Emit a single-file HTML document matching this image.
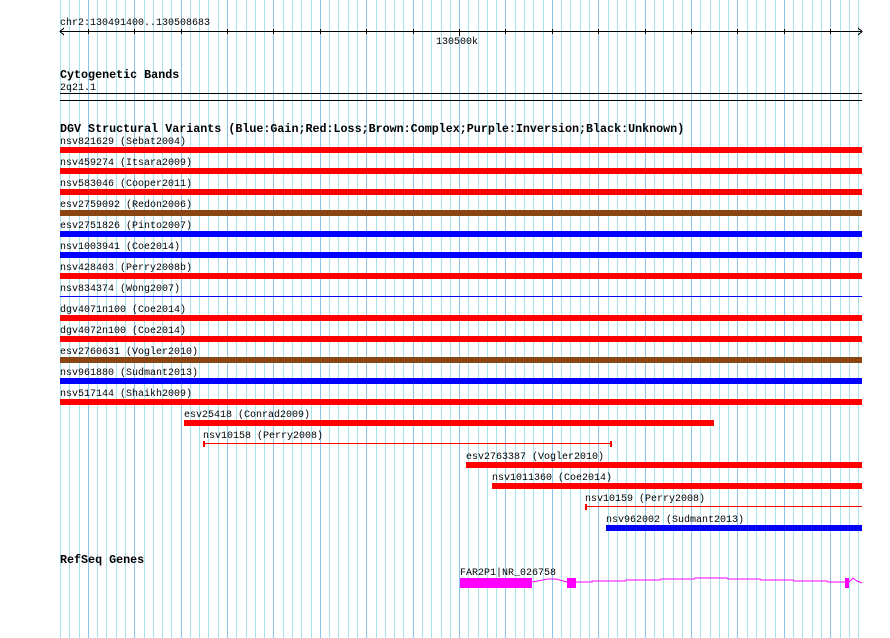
<!DOCTYPE html>
<html><head><meta charset="utf-8"><style>
html,body{margin:0;padding:0;background:#fff;width:890px;height:638px;overflow:hidden}
svg{display:block}
text{font-family:"Liberation Mono",monospace;font-size:10px;fill:#000}
.b{font-weight:bold;font-size:11.7px}
</style></head><body>
<svg width="890" height="638" xmlns="http://www.w3.org/2000/svg" shape-rendering="crispEdges">
<rect width="890" height="638" fill="#fff"/>
<path stroke="#a8e4ee" stroke-width="1" fill="none" d="M60.5 0V638M69.5 0V638M79.5 0V638M97.5 0V638M106.5 0V638M116.5 0V638M125.5 0V638M144.5 0V638M153.5 0V638M162.5 0V638M171.5 0V638M190.5 0V638M199.5 0V638M208.5 0V638M218.5 0V638M236.5 0V638M246.5 0V638M255.5 0V638M264.5 0V638M283.5 0V638M292.5 0V638M301.5 0V638M311.5 0V638M329.5 0V638M338.5 0V638M348.5 0V638M357.5 0V638M376.5 0V638M385.5 0V638M394.5 0V638M403.5 0V638M422.5 0V638M431.5 0V638M441.5 0V638M450.5 0V638M468.5 0V638M478.5 0V638M487.5 0V638M496.5 0V638M515.5 0V638M524.5 0V638M533.5 0V638M543.5 0V638M561.5 0V638M570.5 0V638M580.5 0V638M589.5 0V638M608.5 0V638M617.5 0V638M626.5 0V638M635.5 0V638M654.5 0V638M663.5 0V638M673.5 0V638M682.5 0V638M700.5 0V638M710.5 0V638M719.5 0V638M728.5 0V638M747.5 0V638M756.5 0V638M765.5 0V638M775.5 0V638M793.5 0V638M802.5 0V638M812.5 0V638M821.5 0V638M840.5 0V638M849.5 0V638M858.5 0V638"/>
<path stroke="#8cc4ec" stroke-width="1" fill="none" d="M88.5 0V638M134.5 0V638M181.5 0V638M227.5 0V638M273.5 0V638M320.5 0V638M366.5 0V638M413.5 0V638M459.5 0V638M505.5 0V638M552.5 0V638M598.5 0V638M645.5 0V638M691.5 0V638M737.5 0V638M784.5 0V638M830.5 0V638"/>

<!-- ruler -->
<text x="60" y="25">chr2:130491400..130508683</text>
<rect x="60" y="31" width="802" height="1" fill="#000"/>
<path d="M64 28 L60 31.5 L64 35 M858 28 L862 31.5 L858 35" stroke="#000" fill="none"/>
<g fill="#000">
<rect x="88" y="29" width="1" height="5"/><rect x="134" y="29" width="1" height="5"/><rect x="181" y="29" width="1" height="5"/><rect x="227" y="29" width="1" height="5"/><rect x="273" y="29" width="1" height="5"/><rect x="320" y="29" width="1" height="5"/><rect x="366" y="29" width="1" height="5"/><rect x="413" y="29" width="1" height="5"/><rect x="459" y="29" width="1" height="7"/><rect x="505" y="29" width="1" height="5"/><rect x="552" y="29" width="1" height="5"/><rect x="598" y="29" width="1" height="5"/><rect x="645" y="29" width="1" height="5"/><rect x="691" y="29" width="1" height="5"/><rect x="737" y="29" width="1" height="5"/><rect x="784" y="29" width="1" height="5"/><rect x="830" y="29" width="1" height="5"/>
</g>
<text x="436" y="44">130500k</text>

<!-- cytobands -->
<text class="b" x="60" y="78">Cytogenetic Bands</text>
<text x="60" y="90">2q21.1</text>
<rect x="60" y="93" width="802" height="1" fill="#000"/>
<rect x="60" y="100" width="802" height="1" fill="#000"/>

<!-- DGV -->
<text class="b" x="60" y="132">DGV Structural Variants (Blue:Gain;Red:Loss;Brown:Complex;Purple:Inversion;Black:Unknown)</text>
<text x="60" y="144">nsv821629 (Sebat2004)</text><rect x="60" y="147" width="802" height="6" fill="#f00"/>
<text x="60" y="165">nsv459274 (Itsara2009)</text><rect x="60" y="168" width="802" height="6" fill="#f00"/>
<text x="60" y="186">nsv583046 (Cooper2011)</text><rect x="60" y="189" width="802" height="6" fill="#f00"/>
<text x="60" y="207">esv2759092 (Redon2006)</text><rect x="60" y="210" width="802" height="6" fill="#8b4513"/>
<text x="60" y="228">esv2751826 (Pinto2007)</text><rect x="60" y="231" width="802" height="6" fill="#00f"/>
<text x="60" y="249">nsv1003941 (Coe2014)</text><rect x="60" y="252" width="802" height="6" fill="#00f"/>
<text x="60" y="270">nsv428403 (Perry2008b)</text><rect x="60" y="273" width="802" height="6" fill="#f00"/>
<text x="60" y="291">nsv834374 (Wong2007)</text><rect x="60" y="296" width="802" height="1" fill="#00f"/>
<text x="60" y="312">dgv4071n100 (Coe2014)</text><rect x="60" y="315" width="802" height="6" fill="#f00"/>
<text x="60" y="333">dgv4072n100 (Coe2014)</text><rect x="60" y="336" width="802" height="6" fill="#f00"/>
<text x="60" y="354">esv2760631 (Vogler2010)</text><rect x="60" y="357" width="802" height="6" fill="#8b4513"/>
<text x="60" y="375">nsv961880 (Sudmant2013)</text><rect x="60" y="378" width="802" height="6" fill="#00f"/>
<text x="60" y="396">nsv517144 (Shaikh2009)</text><rect x="60" y="399" width="802" height="6" fill="#f00"/>
<text x="184" y="417">esv25418 (Conrad2009)</text><rect x="184" y="420" width="530" height="6" fill="#f00"/>
<text x="203" y="438">nsv10158 (Perry2008)</text><rect x="203" y="443" width="408" height="1" fill="#f00"/><rect x="203" y="441" width="2" height="6" fill="#f00"/><rect x="610" y="441" width="2" height="6" fill="#f00"/>
<text x="466" y="459">esv2763387 (Vogler2010)</text><rect x="466" y="462" width="396" height="6" fill="#f00"/>
<text x="492" y="480">nsv1011360 (Coe2014)</text><rect x="492" y="483" width="370" height="6" fill="#f00"/>
<text x="585" y="501">nsv10159 (Perry2008)</text><rect x="585" y="506" width="277" height="1" fill="#f00"/><rect x="585" y="504" width="2" height="6" fill="#f00"/>
<text x="606" y="522">nsv962002 (Sudmant2013)</text><rect x="606" y="525" width="256" height="6" fill="#00f"/>

<!-- RefSeq -->
<text class="b" x="60" y="563">RefSeq Genes</text>
<text x="460" y="575">FAR2P1|NR_026758</text>
<rect x="460" y="578" width="72" height="10" fill="#f0f"/>
<rect x="567" y="578" width="9" height="10" fill="#f0f"/>
<rect x="845" y="578" width="4" height="10" fill="#f0f"/>
<path d="M532 582 L548 579 L556 579 L567 582 M576 582 L592 582 L592 581 L625 581 L626 580 L660 580 L661 579 L694 579 L695 578 L727 578 L728 579 L760 579 L761 580 L793 580 L794 581 L827 581 L828 582 L845 582 M849 582 L853 578 L857 581 L862 583" stroke="#f0f" fill="none" shape-rendering="auto"/>
</svg>
</body></html>
